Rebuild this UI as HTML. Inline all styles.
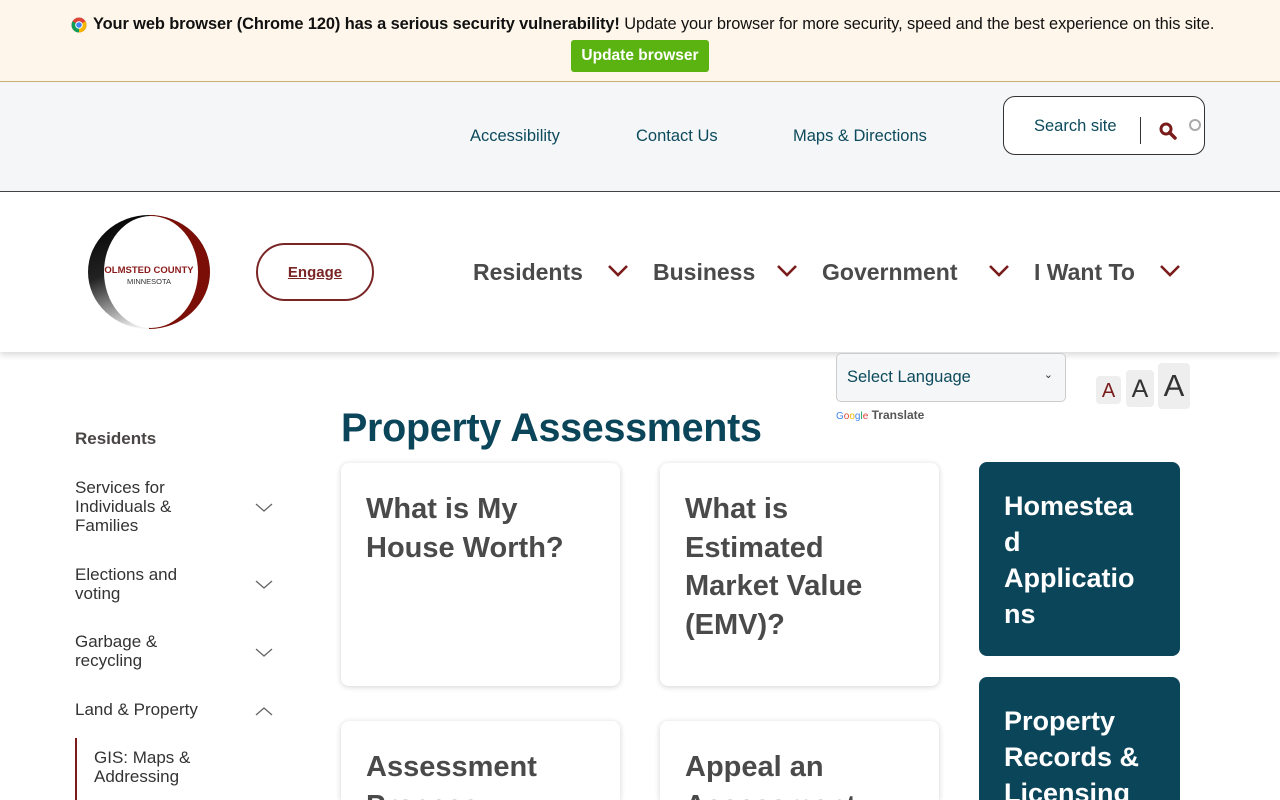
<!DOCTYPE html>
<html><head><meta charset="utf-8"><style>
*{box-sizing:border-box;margin:0;padding:0}
html,body{width:1280px;height:800px;overflow:hidden}
body{font-family:"Liberation Sans",sans-serif;background:#fff;position:relative}
.abs{position:absolute}
#banner{left:0;top:0;width:1280px;height:82px;background:#fef6ea;border-bottom:1px solid #c9ae6f}
#util{left:0;top:82px;width:1280px;height:110px;background:#f5f6f8;border-bottom:1px solid #444}
.ul{color:#0c4a5c;font-size:16.5px;top:127px}
#hdr{left:0;top:192px;width:1280px;height:160px;background:#fff;box-shadow:0 3px 6px rgba(0,0,0,.15)}
.nav{top:259px;font-size:23px;font-weight:bold;color:#4a4a4a}
.chev{top:263px}
.card{background:#fff;border-radius:8px;box-shadow:0 1px 6px rgba(0,0,0,.18);padding:27px 25px;font-size:29px;font-weight:bold;color:#4a4a4a;line-height:38.5px;overflow:hidden}
.blue{background:#0b4559;border-radius:8px;color:#fff;font-size:27px;font-weight:bold;line-height:36px;padding:26px 25px;white-space:nowrap;overflow:hidden}
.sb{left:75px;font-size:17px;color:#333;line-height:19px}
</style></head><body>
<div id="banner" class="abs"></div>
<svg class="abs" style="left:71px;top:17px" width="16" height="16" viewBox="0 0 16 16"><circle cx="8" cy="8" r="7.5" fill="#db4437"/><path d="M8 8 L1.5 4.3 A7.5 7.5 0 0 0 8 15.5Z" fill="#0f9d58"/><path d="M8 8 L8 15.5 A7.5 7.5 0 0 0 14.5 4.3Z" fill="#f4b400"/><circle cx="8" cy="8" r="3.8" fill="#fff"/><circle cx="8" cy="8" r="2.8" fill="#4285f4"/></svg>
<div class="abs" style="left:93px;top:15px;font-size:16.4px;color:#111;white-space:nowrap;letter-spacing:-0.1px"><b>Your web browser (Chrome 120) has a serious security vulnerability!</b> Update your browser for more security, speed and the best experience on this site.</div>
<div class="abs" style="left:571px;top:40px;width:138px;height:32px;background:#5bb312;border-radius:3px;color:#fff;font-size:15.5px;font-weight:bold;text-align:center;line-height:32px">Update browser</div>

<div id="util" class="abs"></div>
<div class="abs ul" style="left:470px">Accessibility</div>
<div class="abs ul" style="left:636px">Contact Us</div>
<div class="abs ul" style="left:793px">Maps &amp; Directions</div>
<div class="abs" style="left:1003px;top:96px;width:202px;height:59px;border:1px solid #333;border-radius:12px;background:#fff"></div>
<div class="abs" style="left:1034px;top:117px;font-size:16.5px;color:#0c4a5c">Search site</div>
<div class="abs" style="left:1140px;top:117px;width:1px;height:27px;background:#333"></div>
<svg class="abs" style="left:1158px;top:121px" width="20" height="20" viewBox="0 0 20 20"><circle cx="8" cy="8" r="5" fill="none" stroke="#7a1c1c" stroke-width="3"/><path d="M11.5 11.5L17 17" stroke="#7a1c1c" stroke-width="3.5" stroke-linecap="round"/></svg>
<div class="abs" style="left:1189px;top:119px;width:12px;height:12px;border:2px solid #aaa;border-radius:50%"></div>

<div id="hdr" class="abs"></div>
<svg class="abs" style="left:87px;top:214px" width="124" height="116" viewBox="0 0 124 116"><defs><linearGradient id="g" x1="0" y1="0" x2="0.4" y2="1"><stop offset="0" stop-color="#000"/><stop offset="0.5" stop-color="#222"/><stop offset="1" stop-color="#f4f4f4"/></linearGradient></defs>
<ellipse cx="62" cy="58" rx="61" ry="57" fill="url(#g)"/>
<path d="M62 1 A61 57 0 0 1 62 115Z" fill="#7b0f08"/>
<ellipse cx="64" cy="58" rx="47" ry="56" fill="#fff"/>
<text x="62" y="59" text-anchor="middle" font-family="Liberation Sans" font-size="9.5" font-weight="bold" fill="#8a1a1a">OLMSTED COUNTY</text>
<text x="62" y="70" text-anchor="middle" font-family="Liberation Sans" font-size="7.5" fill="#333">MINNESOTA</text></svg>
<div class="abs" style="left:256px;top:243px;width:118px;height:58px;border:2px solid #7a2525;border-radius:30px;text-align:center;line-height:56px;font-size:15px;font-weight:bold;color:#7a2525;text-decoration:underline">Engage</div>
<div class="abs nav" style="left:473px">Residents</div>
<div class="abs nav" style="left:653px">Business</div>
<div class="abs nav" style="left:822px">Government</div>
<div class="abs nav" style="left:1034px">I Want To</div>
<svg class="abs chev" style="left:606px" width="24" height="16" viewBox="0 0 24 16"><path d="M3 3L12 12L21 3" fill="none" stroke="#7a1c1c" stroke-width="2.6"/></svg>
<svg class="abs chev" style="left:775px" width="24" height="16" viewBox="0 0 24 16"><path d="M3 3L12 12L21 3" fill="none" stroke="#7a1c1c" stroke-width="2.6"/></svg>
<svg class="abs chev" style="left:987px" width="24" height="16" viewBox="0 0 24 16"><path d="M3 3L12 12L21 3" fill="none" stroke="#7a1c1c" stroke-width="2.6"/></svg>
<svg class="abs chev" style="left:1158px" width="24" height="16" viewBox="0 0 24 16"><path d="M3 3L12 12L21 3" fill="none" stroke="#7a1c1c" stroke-width="2.6"/></svg>

<div class="abs" style="left:836px;top:353px;width:230px;height:49px;border:1px solid #ccc;border-radius:5px;background:#f5f6f8;font-size:16.5px;color:#0c4a5c;padding:14px 10px">Select Language<span style="position:absolute;right:12px;top:14px;font-size:11px;color:#333">&#8964;</span></div>
<div class="abs" style="left:836px;top:408px;font-size:12px;font-weight:bold;color:#555"><span style="font-size:10px;font-weight:normal"><span style="color:#4285f4">G</span><span style="color:#db4437">o</span><span style="color:#f4b400">o</span><span style="color:#4285f4">g</span><span style="color:#0f9d58">l</span><span style="color:#db4437">e</span></span> Translate</div>
<div class="abs" style="left:1096px;top:376px;width:25px;height:28px;background:#eee;border-radius:4px;color:#7a1c1c;font-size:20px;text-align:center;line-height:30px">A</div>
<div class="abs" style="left:1126px;top:370px;width:28px;height:37px;background:#eee;border-radius:4px;color:#333;font-size:25px;text-align:center;line-height:38px">A</div>
<div class="abs" style="left:1158px;top:363px;width:32px;height:46px;background:#eee;border-radius:4px;color:#333;font-size:31px;text-align:center;line-height:46px">A</div>

<div class="abs" style="left:341px;top:406px;font-size:39.5px;font-weight:bold;color:#0b4559;letter-spacing:-0.3px">Property Assessments</div>

<div class="abs" style="left:75px;top:429px;font-size:17px;font-weight:bold;color:#4a4545">Residents</div>
<div class="abs sb" style="top:478px">Services for<br>Individuals &amp;<br>Families</div>
<div class="abs sb" style="top:565px">Elections and<br>voting</div>
<div class="abs sb" style="top:632px">Garbage &amp;<br>recycling</div>
<div class="abs sb" style="top:700px">Land &amp; Property</div>
<svg class="abs" style="left:255px;top:502px" width="18" height="12"><path d="M1 2L9 9L17 2" fill="none" stroke="#666" stroke-width="1.3"/></svg>
<svg class="abs" style="left:255px;top:579px" width="18" height="12"><path d="M1 2L9 9L17 2" fill="none" stroke="#666" stroke-width="1.3"/></svg>
<svg class="abs" style="left:255px;top:647px" width="18" height="12"><path d="M1 2L9 9L17 2" fill="none" stroke="#666" stroke-width="1.3"/></svg>
<svg class="abs" style="left:255px;top:705px" width="18" height="12"><path d="M1 10L9 3L17 10" fill="none" stroke="#666" stroke-width="1.3"/></svg>
<div class="abs" style="left:75px;top:738px;width:2px;height:62px;background:#7a1c1c"></div>
<div class="abs sb" style="left:94px;top:748px">GIS: Maps &amp;<br>Addressing</div>

<div class="abs card" style="left:341px;top:463px;width:279px;height:223px">What is My<br>House Worth?</div>
<div class="abs card" style="left:660px;top:463px;width:279px;height:223px">What is<br>Estimated<br>Market Value<br>(EMV)?</div>
<div class="abs card" style="left:341px;top:721px;width:279px;height:79px;border-bottom-left-radius:0;border-bottom-right-radius:0">Assessment<br>Process</div>
<div class="abs card" style="left:660px;top:721px;width:279px;height:79px;border-bottom-left-radius:0;border-bottom-right-radius:0">Appeal an<br>Assessment</div>
<div class="abs blue" style="left:979px;top:462px;width:201px;height:194px">Homestea<br>d<br>Applicatio<br>ns</div>
<div class="abs blue" style="left:979px;top:677px;width:201px;height:123px;border-bottom-left-radius:0;border-bottom-right-radius:0">Property<br>Records &amp;<br>Licensing</div>
</body></html>
